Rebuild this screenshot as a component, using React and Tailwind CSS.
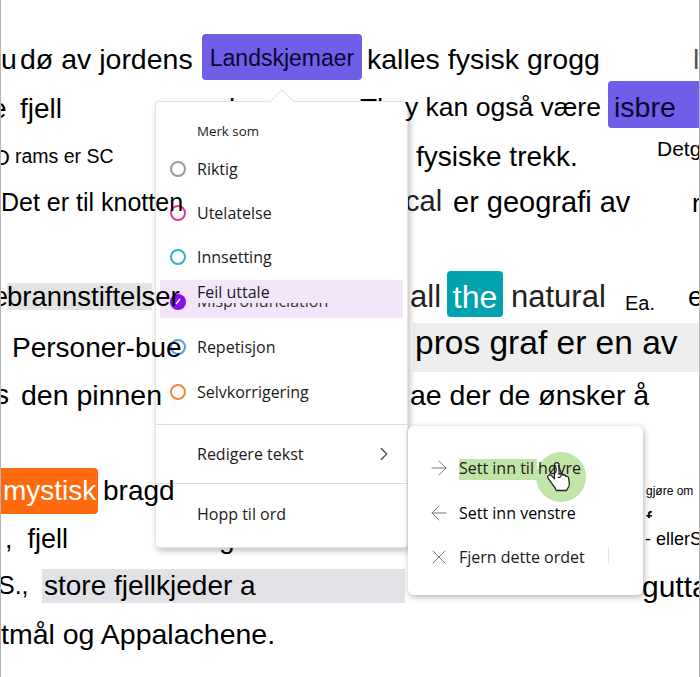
import { ArrowLeft, ArrowRight, ChevronRight, X } from 'lucide-react'

const docFont = "font-['Liberation_Sans',Arial,sans-serif]"
const uiFont = "font-['Open_Sans','Noto_Sans',sans-serif]"

function Radio({ color, className, children }) {
  return (
    <div className={`flex items-center pl-[14px] ${className}`}>
      <span className={`w-4 h-4 rounded-full border-2 ${color}`} />
      <span className="ml-[11px] text-[16px] text-[#1a1a1a]">{children}</span>
    </div>
  )
}

export default function App() {
  return (
    <div className={`relative w-[700px] h-[677px] bg-white overflow-hidden border-l border-r border-[#b5b5b5] text-black ${docFont}`}>
      {/* Line 1 */}
      <div className="flex items-center h-[46px] mt-[34px] text-[28.5px] whitespace-nowrap">
        <span className="w-[19px] shrink-0 mt-[5px]">u</span>
        <span className="w-[182px] shrink-0 mt-[5px]">dø av jordens</span>
        <span className="w-[160px] h-[46px] shrink-0 flex items-center justify-center pt-[2px] rounded-[4px] bg-[#6f5ee8] text-[23px] text-[#0a0630]">Landskjemaer</span>
        <span className="w-[331px] shrink-0 pl-[5px] mt-[5px]">kalles fysisk grogg</span>
        <span className="mt-[5px] text-[#555]">l</span>
      </div>
      {/* Line 2 */}
      <div className="flex items-center h-[46px] mt-[1px] text-[28px] whitespace-nowrap">
        <span className="w-[29px] -ml-[10px] shrink-0 mt-[9px]">e</span>
        <span className="w-[209px] shrink-0 mt-[9px]">fjell</span>
        <span className="w-[131px] shrink-0 mt-[9px]">l</span>
        <span className="w-[45px] shrink-0 mt-[9px]">Th</span>
        <span className="relative z-30 w-[203px] shrink-0 text-[26.5px] mt-[8px]">y kan også være</span>
        <span className="w-[92px] h-[47px] shrink-0 flex items-center pl-[6px] pt-[6px] rounded-l-[4px] bg-[#6f5ee8] text-[28.5px] text-[#0a0630]">isbre</span>
      </div>
      {/* Line 3 */}
      <div className="flex items-center h-[46px] mt-[7px] whitespace-nowrap">
        <span className="w-[21px] -ml-[7px] shrink-0 text-[22px]">D</span>
        <span className="w-[401px] shrink-0 text-[19.5px]">rams er SC</span>
        <span className="w-[241px] shrink-0 text-[28px]">fysiske trekk.</span>
        <span className="text-[21px] -mt-[16px]">Detg</span>
      </div>
      {/* Line 4 */}
      <div className="flex items-center h-[46px] whitespace-nowrap">
        <span className="relative z-30 w-[404px] shrink-0 text-[25px]">Det er til knotten</span>
        <span className="w-[48px] shrink-0 text-[29px] -mt-[3px] text-[#222]">cal</span>
        <span className="w-[239px] shrink-0 text-[29px]">er geografi av</span>
        <span className="text-[26px]">r</span>
      </div>
      {/* Line 5 */}
      <div className="flex items-center h-[46px] mt-[45px] whitespace-nowrap">
        <span className="w-[14px] -ml-[8px] shrink-0 text-[27px] mt-[6px]">e</span>
        <span className="relative z-30 w-[403px] shrink-0 text-[27.5px] mt-[6px]">
          <span className="absolute left-0 top-[7px] w-[145px] h-[27px] bg-[#e3e3e3] -z-10" />
          brannstiftelser
        </span>
        <span className="w-[37px] shrink-0 text-[31px] text-[#222] mt-[6px]">all</span>
        <span className="w-[56px] h-[46px] shrink-0 flex items-center justify-center pt-[6px] rounded-[4px] bg-[#00a3ad] text-[32px] text-white">the</span>
        <span className="w-[122px] shrink-0 pl-[8px] text-[31px] text-[#222] mt-[6px]">natural</span>
        <span className="w-[63px] shrink-0 text-[20px] mt-[18px]">Ea.</span>
        <span className="text-[27px] mt-[6px]">e</span>
      </div>
      {/* Line 6 */}
      <div className="flex items-center h-[49px] mt-[6px] whitespace-nowrap">
        <span className="relative z-30 w-[412px] shrink-0 pl-[11px] text-[28px]">Personer-bue</span>
        <span className="w-[287px] h-[49px] shrink-0 flex items-center pl-[2px] pb-[9px] bg-[#eeeeee] text-[33.5px]">pros graf er en av</span>
      </div>
      {/* Line 7 */}
      <div className="flex items-center h-[46px] whitespace-nowrap">
        <span className="w-[26px] -ml-[6px] shrink-0 text-[28px]">s</span>
        <span className="relative z-30 w-[389px] shrink-0 text-[28.5px]">den pinnen</span>
        <span className="w-[288px] shrink-0 text-[28.5px]">ae der de ønsker å</span>
        <span className="text-[28px]">l</span>
      </div>
      {/* Line 8 */}
      <div className="flex items-center h-[46px] mt-[50px] whitespace-nowrap">
        <span className="w-[97px] h-[46px] shrink-0 flex items-center pl-[2px] rounded-r-[4px] bg-[#ff6a0f] text-[28px] text-white">mystisk</span>
        <span className="relative z-30 w-[548px] shrink-0 pl-[5px] text-[28px]">bragd</span>
        <span className="text-[12px]">gjøre om</span>
      </div>
      {/* Line 9 */}
      <div className="flex items-center h-[46px] mt-[2px] whitespace-nowrap">
        <span className="w-[218px] shrink-0 pl-[4px] text-[27px]">,&nbsp; fjell</span>
        <span className="w-[426px] shrink-0 text-[28px]">g</span>
        <span className="relative text-[18px]">
          <span className="absolute left-[1px] top-[-17px] h-[9px] overflow-hidden text-[22px] leading-[22px]">f</span>
          - ellerS
        </span>
      </div>
      {/* Line 10 */}
      <div className="flex items-center h-[46px] mt-[1px] whitespace-nowrap">
        <span className="w-[44px] -ml-[3px] shrink-0 text-[25px]">S.,</span>
        <span className="w-[363px] h-[34px] shrink-0 flex items-center pl-[2px] bg-[#e1e2e6] text-[28px]">store fjellkjeder a</span>
        <span className="ml-[237px] text-[30px]">gutta</span>
      </div>
      {/* Line 11 */}
      <div className="flex items-center h-[46px] mt-[2px] text-[28.5px] whitespace-nowrap">
        <span>tmål og Appalachene.</span>
      </div>

      {/* Marking menu */}
      <div className={`absolute z-20 left-[154px] top-[101px] w-[253px] h-[447px] rounded-[4px] bg-white border border-[#e4e4e8] shadow-[2px_3px_6px_rgba(0,0,0,0.25)] ${uiFont}`}>
        <div className="absolute left-[117px] top-[-9px] w-[18px] h-[18px] rotate-45 bg-white border-l border-t border-[#e4e4e8]" />
        <div className="relative">
          <div className="pl-[41px] pt-[20px] h-[45px] text-[13.3px] text-[#1a1a1a]">Merk som</div>
          <Radio color="border-[#9a9a9a]" className="h-[44px]">Riktig</Radio>
          <Radio color="border-[#e8359c]" className="h-[44px]">Utelatelse</Radio>
          <Radio color="border-[#2fb5bb]" className="h-[44px]">Innsetting</Radio>
          <div className="relative h-[45px]">
            <div className="absolute left-[4px] right-[4px] top-[1px] h-[38px] bg-[#f3e6fb]" />
            <span className="absolute left-[14px] top-[15px] w-4 h-4 rounded-full bg-[#8a0ff0]">
              <svg className="block" width="16" height="16" viewBox="0 0 16 16" stroke="white" strokeWidth="1.5"><path d="M6 10l4-5" /></svg>
            </span>
            <div className="absolute left-[41px] top-[24px] h-[7px] overflow-hidden">
              <div className="-mt-[14px] text-[16px] text-[#333]">Mispronunciation</div>
            </div>
            <div className="absolute left-[41px] top-[1px] text-[16px] text-[#1a1a1a]">Feil uttale</div>
          </div>
          <Radio color="border-[#5b9be8]" className="h-[45px]">Repetisjon</Radio>
          <Radio color="border-[#f5853f]" className="h-[45px]">Selvkorrigering</Radio>
          <div className="mt-[10px] border-t border-[#dcdce0] h-[59px] flex items-center justify-between pl-[41px] pr-[12px]">
            <span className="text-[16px] text-[#1a1a1a]">Redigere tekst</span>
            <ChevronRight size={22} strokeWidth={1.25} color="#444" />
          </div>
          <div className="border-t border-[#dcdce0] h-[60px] flex items-center pl-[41px]">
            <span className="text-[16px] text-[#1a1a1a]">Hopp til ord</span>
          </div>
        </div>
      </div>

      {/* Edit submenu */}
      <div className={`absolute z-20 left-[407px] top-[426px] w-[235px] h-[169px] rounded-[6px] bg-white shadow-[1px_2px_6px_rgba(0,0,0,0.3)] pt-[20px] ${uiFont}`}>
        <div className="absolute left-[51px] top-[33px] w-[78px] h-[21px] bg-[#c1e4a8]" />
        {/* Tap cursor */}
        <div className="absolute left-[128px] top-[26px] w-[50px] h-[50px] rounded-full bg-[#c1e4a8]" />
        <svg className="absolute left-[137px] top-[33px]" width="28" height="36" viewBox="0 0 30 40" fill="white" stroke="#222" strokeWidth="1.4" strokeLinejoin="round">
          <path d="M10 22V6.500a2.500 2.500 0 0 1 5 0V17l1-.5a2.200 2.200 0 0 1 3 .8l.3.6a2.200 2.200 0 0 1 3 .8l.3.7a2.100 2.100 0 0 1 3 1.300l.9 6.300c.3 2.300-.5 4.200-2 6l-1 2H12l-1.500-3L3 21.500c-1-1.500-.5-3 .8-3.600 1.200-.5 2.500 0 3.400 1z" />
        </svg>
        <div className="absolute left-[200px] top-[122px] w-px h-[15px] bg-[#e4e4e4]" />
        <div className="relative flex items-center h-[44px] pl-[19px]">
          <ArrowRight size={24} strokeWidth={1} color="#777" />
          <span className="ml-[8px] text-[16px] text-[#1a1a1a]">Sett inn til høyre</span>
        </div>
        <div className="relative flex items-center h-[45px] pl-[19px]">
          <ArrowLeft size={24} strokeWidth={1} color="#777" />
          <span className="ml-[8px] text-[16px] font-medium text-black">Sett inn venstre</span>
        </div>
        <div className="relative flex items-center h-[44px] pl-[19px]">
          <X size={24} strokeWidth={1} color="#777" />
          <span className="ml-[8px] text-[16px] text-[#1a1a1a]">Fjern dette ordet</span>
        </div>
      </div>
    </div>
  )
}
